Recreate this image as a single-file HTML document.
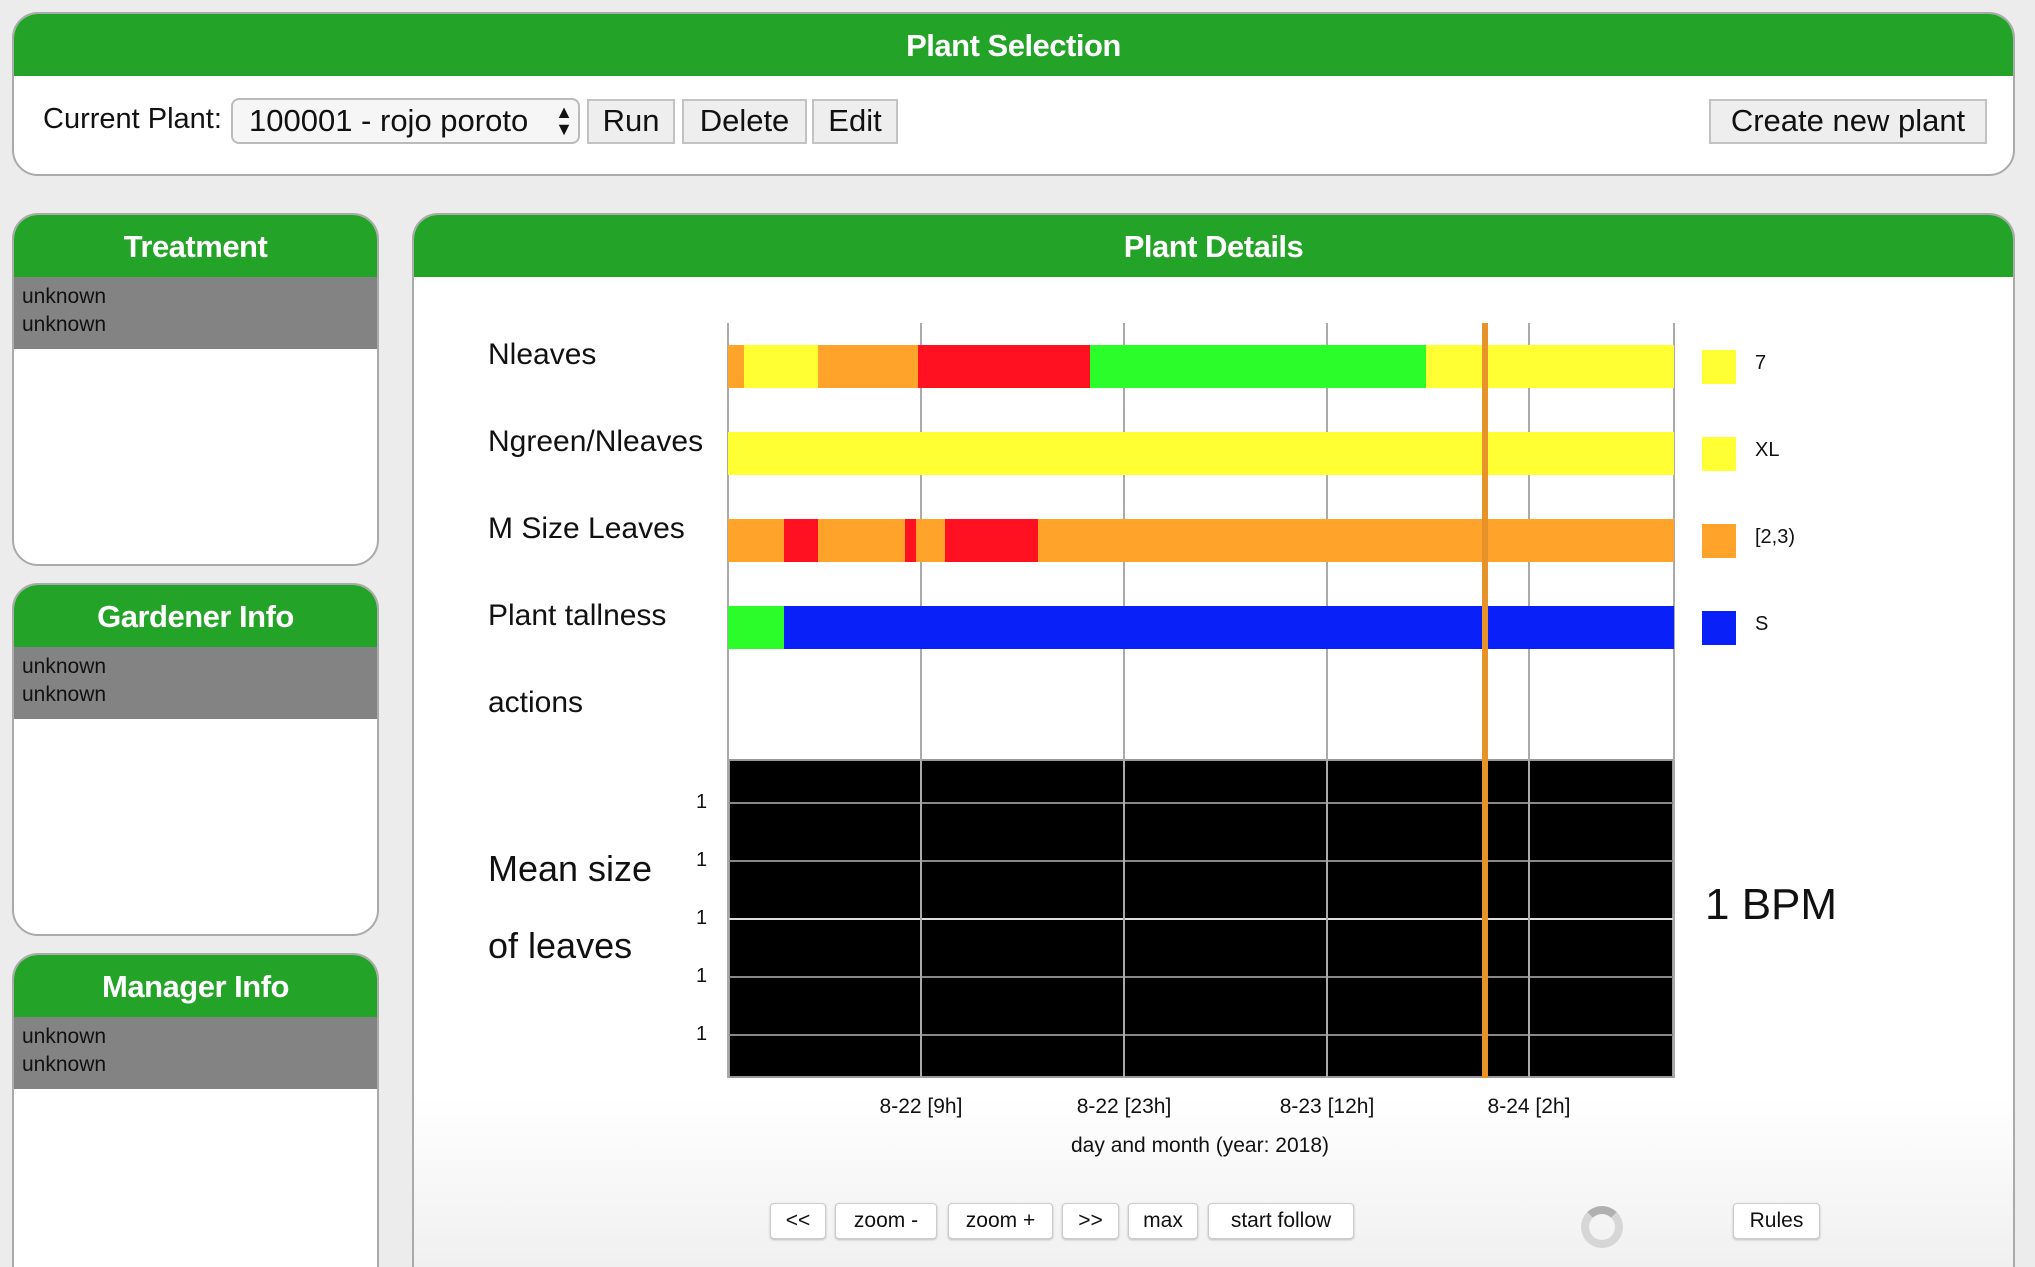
<!DOCTYPE html>
<html><head><meta charset="utf-8"><style>
*{box-sizing:border-box;margin:0;padding:0}
html,body{width:2035px;height:1267px;overflow:hidden;background:#ececec}
#w{position:relative;width:2035px;height:1267px;overflow:hidden;background:#ececec;font-family:"Liberation Sans",sans-serif;color:#111}
.a{position:absolute}
.panel{position:absolute;background:#fff;border:2px solid #aaa;border-radius:26px;overflow:hidden}
.hd{position:absolute;left:0;right:0;top:0;background:#23a428;color:#fff;font-weight:bold;font-size:31px;text-align:center;letter-spacing:-0.5px}
.gray{position:absolute;left:0;right:0;background:#838383;font-size:21px;padding:6px 8px;line-height:28px}
.btn{position:absolute;background:#eee;border:2px solid #c2c2c2;font-size:31px;text-align:center;line-height:40px}
.sb{position:absolute;background:#fff;border:1px solid #ccc;border-radius:4px;box-shadow:0 1px 2px #bbb;font-size:21px;text-align:center;line-height:34px;top:1203px;height:36px}
.lbl{position:absolute;font-size:30px;left:488px}
.vl{position:absolute;width:2px;background:#aaa;top:323px;height:755px}
.hl{position:absolute;left:728px;width:946px;height:2px;background:#888}
.n{position:absolute;font-size:20px;left:696px}
.t{position:absolute;font-size:21px;top:1095px;width:160px;text-align:center}
</style></head><body><div id="w">
<div class="panel" style="left:12px;top:12px;width:2003px;height:164px">
 <div class="hd" style="height:62px;line-height:64px">Plant Selection</div>
 <div class="a" style="left:29px;top:89px;font-size:29px">Current Plant:</div>
 <div class="a" style="left:217px;top:84px;width:349px;height:46px;border:2px solid #bbb;border-radius:8px;background:#f6f6f6;font-size:31px;line-height:42px;padding-left:16px">100001 - rojo poroto<span style="position:absolute;right:5px;top:4px;font-size:18px;line-height:17px">▲<br>▼</span></div>
 <div class="btn" style="left:573px;top:85px;width:88px;height:45px">Run</div>
 <div class="btn" style="left:668px;top:85px;width:125px;height:45px">Delete</div>
 <div class="btn" style="left:798px;top:85px;width:86px;height:45px">Edit</div>
 <div class="btn" style="left:1695px;top:85px;width:278px;height:45px">Create new plant</div>
</div>

<div class="panel" style="left:12px;top:213px;width:367px;height:353px">
 <div class="hd" style="height:62px;line-height:64px">Treatment</div>
 <div class="gray" style="top:62px;height:72px">unknown<br>unknown</div>
</div>
<div class="panel" style="left:12px;top:583px;width:367px;height:353px">
 <div class="hd" style="height:62px;line-height:64px">Gardener Info</div>
 <div class="gray" style="top:62px;height:72px">unknown<br>unknown</div>
</div>
<div class="panel" style="left:12px;top:953px;width:367px;height:340px">
 <div class="hd" style="height:62px;line-height:64px">Manager Info</div>
 <div class="gray" style="top:62px;height:72px">unknown<br>unknown</div>
</div>

<div class="panel" style="left:412px;top:213px;width:1603px;height:1080px;background:linear-gradient(#fff 0,#fff 880px,#f0f0f0 1054px)">
 <div class="hd" style="height:62px;line-height:64px">Plant Details</div>
</div>

<div class="lbl" style="top:338px">Nleaves</div>
<div class="lbl" style="top:425px">Ngreen/Nleaves</div>
<div class="lbl" style="top:512px">M Size Leaves</div>
<div class="lbl" style="top:599px">Plant tallness</div>
<div class="lbl" style="top:686px">actions</div>
<div class="lbl" style="top:848px;font-size:36px">Mean size</div>
<div class="lbl" style="top:925px;font-size:36px">of leaves</div>

<div class="a" style="left:728px;top:759px;width:946px;height:319px;background:#000;border:2px solid #999"></div>
<div class="hl" style="top:802px"></div>
<div class="hl" style="top:860px"></div>
<div class="hl" style="top:918px;background:#ddd"></div>
<div class="hl" style="top:976px"></div>
<div class="hl" style="top:1034px"></div>
<div class="n" style="top:791px">1</div><div class="n" style="top:849px">1</div><div class="n" style="top:907px">1</div><div class="n" style="top:965px">1</div><div class="n" style="top:1023px">1</div>

<div class="vl" style="left:727px"></div>
<div class="vl" style="left:920px"></div>
<div class="vl" style="left:1123px"></div>
<div class="vl" style="left:1326px"></div>
<div class="vl" style="left:1528px"></div>
<div class="vl" style="left:1673px"></div>

<div class="a" style="top:345px;height:43px;left:728px;width:946px">
 <div class="a" style="left:0;width:16px;height:100%;background:#ffa32a"></div>
 <div class="a" style="left:16px;width:74px;height:100%;background:#ffff33"></div>
 <div class="a" style="left:90px;width:100px;height:100%;background:#ffa32a"></div>
 <div class="a" style="left:190px;width:172px;height:100%;background:#ff1122"></div>
 <div class="a" style="left:362px;width:336px;height:100%;background:#2afd2a"></div>
 <div class="a" style="left:698px;width:248px;height:100%;background:#ffff33"></div>
</div>
<div class="a" style="top:432px;height:43px;left:728px;width:946px;background:#ffff33"></div>
<div class="a" style="top:519px;height:43px;left:728px;width:946px;background:#ffa32a">
 <div class="a" style="left:56px;width:34px;height:100%;background:#ff1122"></div>
 <div class="a" style="left:177px;width:11px;height:100%;background:#ff1122"></div>
 <div class="a" style="left:217px;width:93px;height:100%;background:#ff1122"></div>
</div>
<div class="a" style="top:606px;height:43px;left:728px;width:946px;background:#0a20f8">
 <div class="a" style="left:0;width:56px;height:100%;background:#2afd2a"></div>
</div>

<div class="a" style="left:1482px;top:323px;width:6px;height:755px;background:#e8922a"></div>

<div class="a" style="left:1702px;top:350px;width:34px;height:34px;background:#ffff33"></div>
<div class="a" style="left:1702px;top:437px;width:34px;height:34px;background:#ffff33"></div>
<div class="a" style="left:1702px;top:524px;width:34px;height:34px;background:#ffa32a"></div>
<div class="a" style="left:1702px;top:611px;width:34px;height:34px;background:#0a20f8"></div>
<div class="a" style="left:1755px;top:352px;font-size:20px">7</div>
<div class="a" style="left:1755px;top:439px;font-size:20px">XL</div>
<div class="a" style="left:1755px;top:526px;font-size:20px">[2,3)</div>
<div class="a" style="left:1755px;top:613px;font-size:20px">S</div>
<div class="a" style="left:1705px;top:880px;font-size:44px">1 BPM</div>

<div class="t" style="left:841px">8-22 [9h]</div>
<div class="t" style="left:1044px">8-22 [23h]</div>
<div class="t" style="left:1247px">8-23 [12h]</div>
<div class="t" style="left:1449px">8-24 [2h]</div>
<div class="a" style="left:1000px;width:400px;text-align:center;top:1134px;font-size:21px">day and month (year: 2018)</div>

<div class="sb" style="left:770px;width:56px">&lt;&lt;</div>
<div class="sb" style="left:835px;width:102px">zoom -</div>
<div class="sb" style="left:948px;width:105px">zoom +</div>
<div class="sb" style="left:1062px;width:57px">&gt;&gt;</div>
<div class="sb" style="left:1128px;width:70px">max</div>
<div class="sb" style="left:1208px;width:146px">start follow</div>
<div class="sb" style="left:1733px;width:87px">Rules</div>
<div class="a" style="left:1581px;top:1206px;width:42px;height:42px;border-radius:50%;border:8px solid #d6d6d6;border-top-color:#b0b0b0"></div>
</div></body></html>
